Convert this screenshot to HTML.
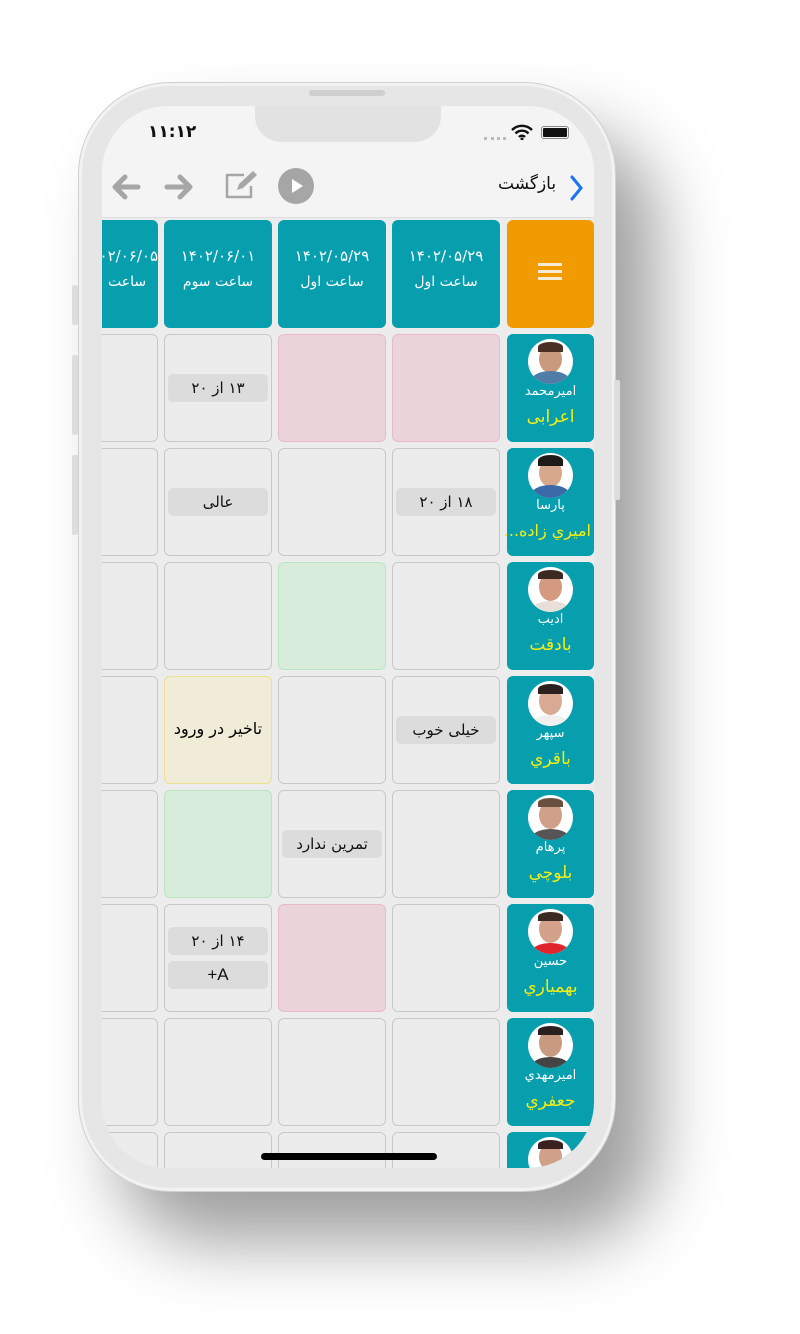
<!DOCTYPE html>
<html><head><meta charset="utf-8"><style>
*{margin:0;padding:0;box-sizing:border-box}
body{width:800px;height:1334px;background:#fff;position:relative;overflow:hidden;font-family:"DejaVu Sans","Liberation Sans",sans-serif}
.abs{position:absolute}
.phone{left:78px;top:82px;width:538px;height:1110px;border-radius:92px;background:#e6e6e6;border:1px solid #d0d0d0;box-shadow:40px 50px 70px rgba(0,0,0,.38),inset 0 0 0 3px #f2f2f2}
.screen{left:102px;top:106px;width:492px;height:1062px;border-radius:66px;background:#ececec;overflow:hidden}
.cell{position:absolute;width:108px;height:108px;border:1.5px solid #c8c8c8;border-radius:6px;background:#ececec}
.pink{background:#ead4da;border-color:#e9b9c8}
.green{background:#d8ecdc;border-color:#b8e4c0}
.yellow{background:#f1ecd8;border-color:#ece08e}
.chip{position:absolute;left:3px;right:3px;height:28px;background:#dcdcdc;border-radius:5px;font-size:15px;color:#111;text-align:center;line-height:28px;direction:rtl}
.hdr{position:absolute;top:114px;width:108px;height:108px;background:#079eae;border-radius:6px;color:#fff;text-align:center;font-size:14px}
.st{position:absolute;left:405px;width:87px;height:108px;background:#079eae;border-radius:6px;text-align:center}
.av{position:absolute;left:21px;top:5px;width:45px;height:45px;border-radius:50%;background:#fff;overflow:hidden}
.fn{position:absolute;top:50px;width:100%;font-size:13px;color:#fff;direction:rtl}
.ln{position:absolute;top:73px;width:100%;font-size:17px;color:#f5ee13;direction:rtl;white-space:nowrap}
</style></head><body>
<div class="abs phone"></div>
<div class="abs" style="left:309px;top:90px;width:76px;height:6px;border-radius:3px;background:#cfcfcf"></div>
<div class="abs" style="left:72px;top:285px;width:6px;height:40px;background:#ddd;border-radius:2px"></div>
<div class="abs" style="left:72px;top:355px;width:6px;height:80px;background:#ddd;border-radius:2px"></div>
<div class="abs" style="left:72px;top:455px;width:6px;height:80px;background:#ddd;border-radius:2px"></div>
<div class="abs" style="left:614px;top:380px;width:6px;height:120px;background:#ddd;border-radius:2px"></div>
<div class="abs screen">
  <div class="abs" style="left:0;top:0;width:492px;height:112px;background:#f4f4f4;border-bottom:1px solid #ddd"></div>
  <div class="abs" style="left:153px;top:0;width:186px;height:36px;background:#e2e2e2;border-radius:0 0 26px 26px"></div>
  <div class="abs" style="left:46px;top:16px;font-size:17px;font-weight:bold;color:#111">۱۱:۱۲</div>
  <div class="abs" style="left:382px;top:31px;width:22px;height:3px;border-top:3px dotted #bbb"></div>
  <svg class="abs" style="left:409px;top:18px" width="22" height="16" viewBox="0 0 22 16"><path d="M1 6a14 14 0 0 1 20 0M4.5 9.5a9 9 0 0 1 13 0M8 13a4 4 0 0 1 6 0" stroke="#111" stroke-width="2.4" fill="none"/><circle cx="11" cy="15" r="1.5" fill="#111"/></svg>
  <div class="abs" style="left:439px;top:20px;width:28px;height:13px;border:1.5px solid #888;border-radius:3px;padding:1px"><div style="width:100%;height:100%;background:#111;border-radius:1px"></div></div>
  <svg class="abs" style="left:8px;top:66px" width="32" height="30" viewBox="0 0 32 30"><path d="M28 15H6M15 5L5 15l10 10" stroke="#a6a6a6" stroke-width="5" fill="none" stroke-linecap="round" stroke-linejoin="round"/></svg>
  <svg class="abs" style="left:61px;top:66px" width="32" height="30" viewBox="0 0 32 30"><path d="M4 15h22M17 5l10 10-10 10" stroke="#a6a6a6" stroke-width="5" fill="none" stroke-linecap="round" stroke-linejoin="round"/></svg>
  <svg class="abs" style="left:122px;top:64px" width="34" height="30" viewBox="0 0 34 30"><path d="M20 5H3v22h24V16" stroke="#a6a6a6" stroke-width="2.5" fill="none" stroke-linejoin="round"/><path d="M13 20l2-6L29 1l4 4-14 13z" fill="#a6a6a6"/></svg>
  <div class="abs" style="left:176px;top:62px;width:36px;height:36px;border-radius:50%;background:#a6a6a6"></div>
  <svg class="abs" style="left:176px;top:62px" width="36" height="36"><path d="M14 11l11 7-11 7z" fill="#fff"/></svg>
  <div class="abs" style="left:396px;top:68px;font-size:17px;color:#111;direction:rtl">بازگشت</div>
  <svg class="abs" style="left:466px;top:68px" width="16" height="28"><path d="M4 3l9 11-9 11" stroke="#1a73f0" stroke-width="3" fill="none" stroke-linecap="round"/></svg>

  <div class="abs" style="left:405px;top:114px;width:87px;height:108px;background:#f09c00;border-radius:6px"></div>
  <div class="abs" style="left:436px;top:157px;width:24px;height:3px;background:#f6e9d6;box-shadow:0 7px 0 #f6e9d6,0 14px 0 #f6e9d6"></div>
  <div class="hdr" style="left:290px"><div style="margin-top:27px;font-size:15px">۱۴۰۲/۰۵/۲۹</div><div style="margin-top:9px;direction:rtl">ساعت اول</div></div>
  <div class="hdr" style="left:176px"><div style="margin-top:27px;font-size:15px">۱۴۰۲/۰۵/۲۹</div><div style="margin-top:9px;direction:rtl">ساعت اول</div></div>
  <div class="hdr" style="left:62px"><div style="margin-top:27px;font-size:15px">۱۴۰۲/۰۶/۰۱</div><div style="margin-top:9px;direction:rtl">ساعت سوم</div></div>
  <div class="hdr" style="left:-52px"><div style="margin-top:27px;font-size:15px;text-align:right">۱۴۰۲/۰۶/۰۵</div><div style="margin-top:9px;direction:rtl;text-align:left;padding-left:58px">ساعت</div></div>

  <div class="cell" style="left:-52px;top:228px"></div>
  <div class="cell" style="left:62px;top:228px"><div class="chip" style="top:39px">۱۳ از ۲۰</div></div>
  <div class="cell pink" style="left:176px;top:228px"></div>
  <div class="cell pink" style="left:290px;top:228px"></div>
  <div class="st" style="top:228px"><div class="av"><div class="abs" style="left:11px;top:6px;width:23px;height:28px;border-radius:50%;background:#c99a7c"></div><div class="abs" style="left:10px;top:3px;width:25px;height:10px;border-radius:50% 50% 0 0;background:#4a3024"></div><div class="abs" style="left:3px;top:32px;width:39px;height:20px;border-radius:50%;background:#4f7da8"></div></div><div class="fn">امیرمحمد</div><div class="ln">اعرابی</div></div>

  <div class="cell" style="left:-52px;top:342px"></div>
  <div class="cell" style="left:62px;top:342px"><div class="chip" style="top:39px">عالی</div></div>
  <div class="cell" style="left:176px;top:342px"></div>
  <div class="cell" style="left:290px;top:342px"><div class="chip" style="top:39px">۱۸ از ۲۰</div></div>
  <div class="st" style="top:342px"><div class="av"><div class="abs" style="left:11px;top:6px;width:23px;height:28px;border-radius:50%;background:#d8a88c"></div><div class="abs" style="left:10px;top:2px;width:25px;height:11px;border-radius:50% 50% 0 0;background:#1e1a1a"></div><div class="abs" style="left:3px;top:32px;width:39px;height:20px;border-radius:50%;background:#3a6aa8"></div></div><div class="fn">پارسا</div><div class="ln" style="font-size:16px;left:-3px">امیري زاده...</div></div>

  <div class="cell" style="left:-52px;top:456px"></div>
  <div class="cell" style="left:62px;top:456px"></div>
  <div class="cell green" style="left:176px;top:456px"></div>
  <div class="cell" style="left:290px;top:456px"></div>
  <div class="st" style="top:456px"><div class="av"><div class="abs" style="left:11px;top:6px;width:23px;height:28px;border-radius:50%;background:#d49a80"></div><div class="abs" style="left:10px;top:3px;width:25px;height:9px;border-radius:50% 50% 0 0;background:#3a2a22"></div><div class="abs" style="left:3px;top:34px;width:39px;height:20px;border-radius:50%;background:#e8e0d8"></div></div><div class="fn">ادیب</div><div class="ln">بادقت</div></div>

  <div class="cell" style="left:-52px;top:570px"></div>
  <div class="cell yellow" style="left:62px;top:570px"><div class="abs" style="top:38px;width:100%;text-align:center;font-size:16px;direction:rtl;line-height:28px">تاخیر در ورود</div></div>
  <div class="cell" style="left:176px;top:570px"></div>
  <div class="cell" style="left:290px;top:570px"><div class="chip" style="top:39px">خیلی خوب</div></div>
  <div class="st" style="top:570px"><div class="av"><div class="abs" style="left:11px;top:6px;width:23px;height:28px;border-radius:50%;background:#d8aa94"></div><div class="abs" style="left:10px;top:3px;width:25px;height:10px;border-radius:50% 50% 0 0;background:#2a2020"></div><div class="abs" style="left:3px;top:34px;width:39px;height:20px;border-radius:50%;background:#f0f0f0"></div></div><div class="fn">سپهر</div><div class="ln">باقري</div></div>

  <div class="cell" style="left:-52px;top:684px"></div>
  <div class="cell green" style="left:62px;top:684px"></div>
  <div class="cell" style="left:176px;top:684px"><div class="chip" style="top:39px">تمرین ندارد</div></div>
  <div class="cell" style="left:290px;top:684px"></div>
  <div class="st" style="top:684px"><div class="av"><div class="abs" style="left:11px;top:6px;width:23px;height:28px;border-radius:50%;background:#d0a088"></div><div class="abs" style="left:10px;top:3px;width:25px;height:9px;border-radius:50% 50% 0 0;background:#6a5040"></div><div class="abs" style="left:3px;top:34px;width:39px;height:20px;border-radius:50%;background:#555"></div></div><div class="fn">پرهام</div><div class="ln">بلوچي</div></div>

  <div class="cell" style="left:-52px;top:798px"></div>
  <div class="cell" style="left:62px;top:798px"><div class="chip" style="top:22px">۱۴ از ۲۰</div><div class="chip" style="top:56px;font-family:'Liberation Sans',sans-serif;font-size:17px">A+</div></div>
  <div class="cell pink" style="left:176px;top:798px"></div>
  <div class="cell" style="left:290px;top:798px"></div>
  <div class="st" style="top:798px"><div class="av"><div class="abs" style="left:11px;top:6px;width:23px;height:28px;border-radius:50%;background:#d4a28a"></div><div class="abs" style="left:10px;top:3px;width:25px;height:9px;border-radius:50% 50% 0 0;background:#3a2a22"></div><div class="abs" style="left:3px;top:34px;width:39px;height:20px;border-radius:50%;background:#e0242c"></div></div><div class="fn">حسین</div><div class="ln">بهمیاري</div></div>

  <div class="cell" style="left:-52px;top:912px"></div>
  <div class="cell" style="left:62px;top:912px"></div>
  <div class="cell" style="left:176px;top:912px"></div>
  <div class="cell" style="left:290px;top:912px"></div>
  <div class="st" style="top:912px"><div class="av"><div class="abs" style="left:11px;top:6px;width:23px;height:28px;border-radius:50%;background:#c89a80"></div><div class="abs" style="left:10px;top:3px;width:25px;height:9px;border-radius:50% 50% 0 0;background:#2a2020"></div><div class="abs" style="left:3px;top:34px;width:39px;height:20px;border-radius:50%;background:#444"></div></div><div class="fn">امیرمهدي</div><div class="ln">جعفري</div></div>

  <div class="cell" style="left:-52px;top:1026px"></div>
  <div class="cell" style="left:62px;top:1026px"></div>
  <div class="cell" style="left:176px;top:1026px"></div>
  <div class="cell" style="left:290px;top:1026px"></div>
  <div class="st" style="top:1026px"><div class="av"><div class="abs" style="left:11px;top:6px;width:23px;height:28px;border-radius:50%;background:#d0a088"></div><div class="abs" style="left:10px;top:3px;width:25px;height:9px;border-radius:50% 50% 0 0;background:#3a2020"></div></div></div>
  <div class="abs" style="left:159px;top:1047px;width:176px;height:7px;border-radius:4px;background:#000"></div>
</div>
</body></html>
